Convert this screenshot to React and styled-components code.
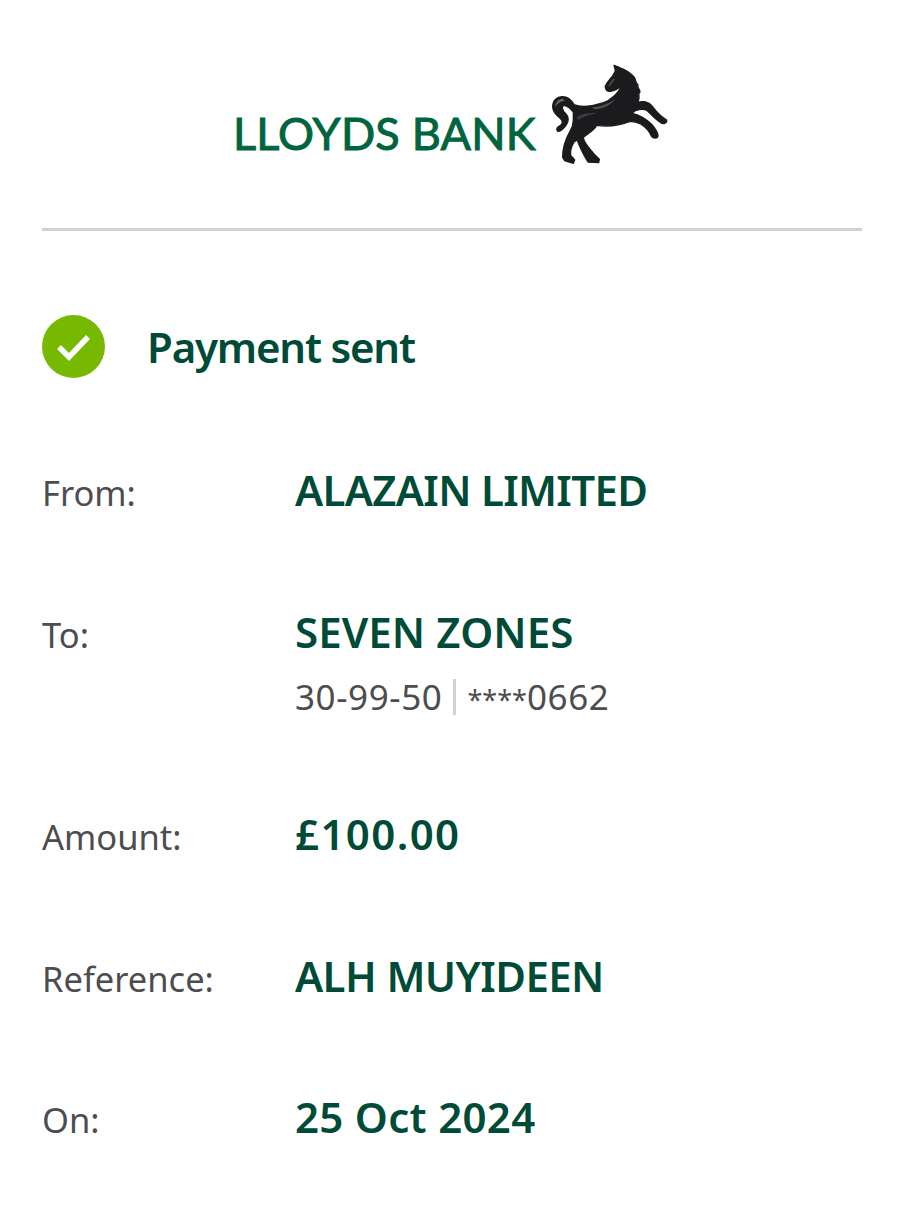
import React from 'react';
import styled, { createGlobalStyle } from 'styled-components';

const Global = createGlobalStyle`
  html, body { margin: 0; padding: 0; background: #fff; }
  body { font-family: "Noto Sans", Lato, sans-serif; }
`;

const rows = [
  { label: 'From:', value: 'ALAZAIN LIMITED', spacing: -0.7 },
  { label: 'To:', value: 'SEVEN ZONES', spacing: 0.1, sortCode: '30-99-50', account: '0662' },
  { label: 'Amount:', value: '£100.00', spacing: 1.4 },
  { label: 'Reference:', value: 'ALH MUYIDEEN', spacing: -0.6 },
  { label: 'On:', value: '25 Oct 2024', spacing: 0.3 },
];

const Horse = () => (
  <HorseSvg viewBox="0 0 450 375">
    <path
      fill="#1b1a1c"
      stroke="#1b1a1c"
      strokeWidth="4"
      strokeLinejoin="round"
      d="M252 46 C262 48 268 54 276 56 C290 62 304 70 314 84 C318 92 316 98 324 104 C320 112 330 118 330 126 C322 132 330 140 326 150 L322 158 C338 152 356 154 366 168 C376 182 392 200 410 210 C412 216 406 222 396 220 C380 212 366 196 352 182 C342 176 328 178 316 182 L306 190 C326 194 352 208 366 224 C376 236 384 248 384 258 C382 266 370 266 364 258 C358 244 348 232 332 222 C320 216 308 214 300 214 C270 226 230 230 200 226 C194 240 176 250 160 262 C160 274 176 294 192 312 L208 328 L206 338 L174 336 L168 326 C158 308 148 290 142 270 L132 276 C124 290 120 304 122 316 L134 330 L130 340 L104 332 L98 322 C98 296 106 268 120 244 C126 234 130 222 130 210 L130 186 C122 176 112 168 102 166 C94 168 96 180 106 190 C116 200 118 214 108 226 C102 234 94 244 84 244 C78 240 80 232 88 228 C98 224 100 214 92 206 C80 196 68 186 68 170 C68 152 80 140 98 140 C114 140 124 150 132 164 C146 170 168 170 190 166 C210 162 228 158 240 148 C256 136 270 122 272 108 C264 116 254 122 242 124 C232 126 224 118 226 108 C232 96 240 88 248 78 C252 70 256 66 256 60 Z"
    />
    <path fill="#4f4f53" d="M186 172 C212 170 238 160 256 146 C244 164 222 176 196 178 C192 177 188 175 186 172 Z" />
    <path fill="#6a6a6e" d="M98 146 C84 148 76 158 76 170 C82 160 90 154 104 152 Z" />
    <path fill="#55555a" d="M250 86 C242 96 236 104 234 112 C242 106 248 98 254 88 Z" />
    <path fill="#3c3c40" d="M140 200 C160 190 180 188 200 190 C180 194 160 200 144 210 Z" />
  </HorseSvg>
);

export default function App() {
  return (
    <Page>
      <Global />
      <Header>
        <Logo>
          <Brand>LLOYDS BANK</Brand>
          <Horse />
        </Logo>
      </Header>
      <Status>
        <Tick viewBox="0 0 63 63">
          <circle cx="31.5" cy="31.5" r="31.5" fill="#76b900" />
          <path d="M17 32 L27 42 L46 22" fill="none" stroke="#fff" strokeWidth="5.5" />
        </Tick>
        <Title>Payment sent</Title>
      </Status>
      <Details>
        {rows.map(row => (
          <Row key={row.label}>
            <Label>{row.label}</Label>
            <div>
              <Value $spacing={row.spacing}>{row.value}</Value>
              {row.sortCode && (
                <Sub>
                  <span>{row.sortCode}</span>
                  <Divider />
                  <span><Stars>****</Stars>{row.account}</span>
                </Sub>
              )}
            </div>
          </Row>
        ))}
      </Details>
    </Page>
  );
}

const Page = styled.div`
  width: 904px;
  height: 1232px;
  padding: 0 42px;
  box-sizing: border-box;
  background: #fff;
  overflow: hidden;
`;

const Header = styled.header`
  border-bottom: 3px solid #ced1d8;
  padding-top: 61px;
  height: 167px;
`;

const Logo = styled.div`
  display: flex;
  align-items: flex-start;
  margin-left: 191px;
`;

const Brand = styled.div`
  margin-top: 46px;
  width: 312px;
  font-family: Lato, sans-serif;
  font-size: 45px;
  line-height: 52px;
  letter-spacing: 0.2px;
  -webkit-text-stroke: 1px #00653f;
  color: #00653f;
  white-space: nowrap;
`;

const HorseSvg = styled.svg`
  width: 150px;
  height: 125px;
  margin: -11px 0 0 -15px;
`;

const Status = styled.div`
  display: flex;
  align-items: center;
  gap: 42px;
  margin-top: 84px;
`;

const Tick = styled.svg`
  width: 63px;
  height: 63px;
  flex: none;
`;

const Title = styled.h1`
  margin: 0;
  font-size: 42px;
  line-height: 52px;
  font-weight: 600;
  letter-spacing: -1.2px;
  color: #004b37;
`;

const Details = styled.div`
  margin-top: 86px;
  display: flex;
  flex-direction: column;
  gap: 89.6px;
`;

const Row = styled.div`
  display: grid;
  grid-template-columns: 253px 1fr;
  align-items: start;
`;

const Label = styled.div`
  height: 52px;
  font-size: 34.5px;
  line-height: 58px;
  color: #4d4d4f;
`;

const Value = styled.div`
  font-size: 42px;
  line-height: 52px;
  font-weight: 600;
  letter-spacing: ${({ $spacing }) => $spacing}px;
  color: #004b37;
`;

const Sub = styled.div`
  display: flex;
  align-items: center;
  margin-top: 17px;
  height: 44px;
  font-size: 35px;
  letter-spacing: 0.6px;
  color: #4d4d4f;
`;

const Stars = styled.span`
  font-size: 27px;
  letter-spacing: 0;
`;

const Divider = styled.span`
  width: 3px;
  height: 36px;
  margin: 0 11px;
  background: #ced1d8;
`;
